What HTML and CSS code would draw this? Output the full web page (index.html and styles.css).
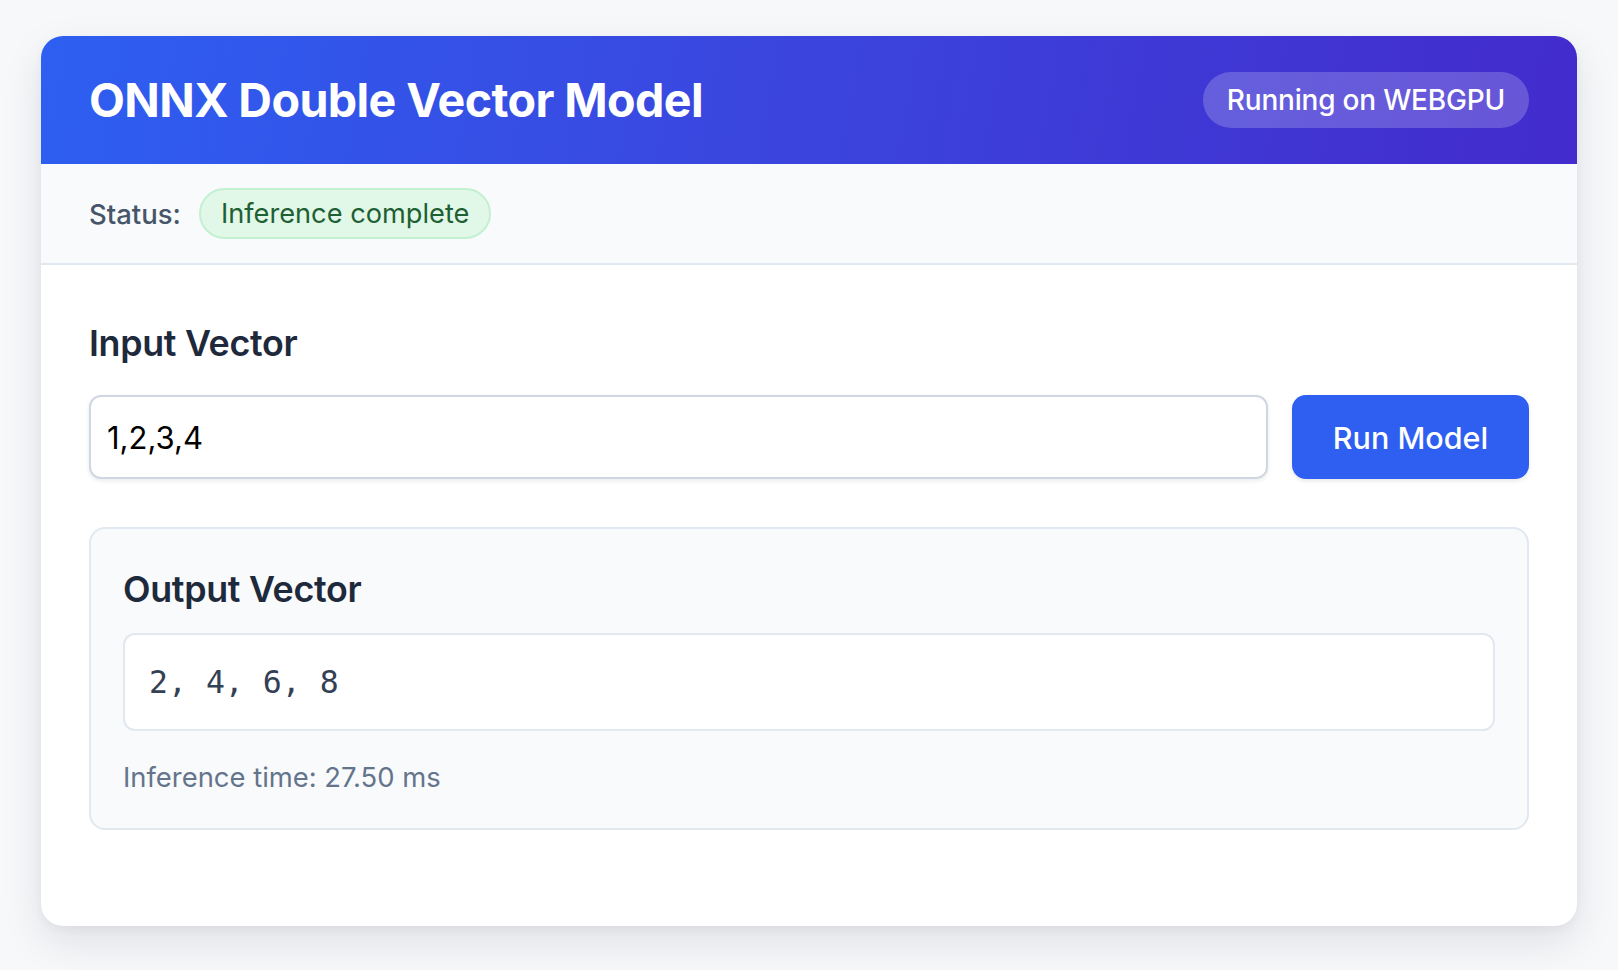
FILE: index.html
```html
<!DOCTYPE html>
<html lang="en">
<head>
<meta charset="utf-8">
<title>ONNX Double Vector Model</title>
<link rel="stylesheet" href="styles.css">
</head>
<body>
<main class="card">
  <header class="card-header">
    <h1 class="title">ONNX Double Vector Model</h1>
    <span class="backend">Running on WEBGPU</span>
  </header>
  <div class="status-bar">
    <span class="status-label">Status:</span>
    <span class="status-pill">Inference complete</span>
  </div>
  <section class="content">
    <h2 class="section-title">Input Vector</h2>
    <div class="input-row">
      <input class="vector-input" type="text" value="1,2,3,4">
      <button class="run-btn" type="button">Run Model</button>
    </div>
    <div class="output-box">
      <h2 class="section-title out-title">Output Vector</h2>
      <div class="output-value">2, 4, 6, 8</div>
      <p class="timing">Inference time: 27.50 ms</p>
    </div>
  </section>
</main>
</body>
</html>
```

FILE: styles.css
```css
* { box-sizing: border-box; }
html, body { margin: 0; padding: 0; }
body {
  background: #f7f8fa;
  font-family: Inter, "Noto Sans", "Liberation Sans", sans-serif;
  color: #1e293b;
  padding: 36px 0 44px;
}
.card {
  width: 1536px;
  margin: 0 auto;
  background: #ffffff;
  border-radius: 22px;
  overflow: hidden;
  box-shadow: 0 16px 40px rgba(15, 23, 42, 0.10), 0 4px 10px rgba(15, 23, 42, 0.04);
}
.card-header {
  height: 128px;
  padding: 0 48px;
  display: flex;
  align-items: center;
  justify-content: space-between;
  background: linear-gradient(100deg, #2d5ff1 0%, #3a47df 45%, #432bcd 100%);
  color: #fff;
}
.title {
  margin: 0;
  font-size: 46.6px;
  font-weight: 700;
  letter-spacing: -0.6px;
}
.backend {
  display: inline-flex;
  align-items: center;
  height: 56px;
  padding: 0 24px;
  border-radius: 28px;
  background: rgba(255, 255, 255, 0.2);
  font-size: 28px;
  font-weight: 500;
  letter-spacing: -0.2px;
}
.status-bar {
  display: flex;
  align-items: center;
  gap: 18px;
  padding: 24px 48px;
  background: #f8fafc;
  border-bottom: 2px solid #e2e8f0;
}
.status-label {
  font-size: 27.5px;
  font-weight: 500;
  color: #475569;
}
.status-pill {
  display: inline-flex;
  align-items: center;
  height: 51px;
  padding: 0 20px;
  border-radius: 26px;
  background: #e1f8e8;
  border: 2px solid #c3f0d1;
  color: #1f5f34;
  font-size: 27.2px;
}
.content {
  padding: 56px 48px 96px;
}
.section-title {
  margin: 0 0 30px;
  font-size: 35.8px;
  font-weight: 600;
  color: #1e293b;
  letter-spacing: -0.3px;
}
.input-row {
  display: flex;
  gap: 24px;
}
.vector-input {
  flex: 1;
  height: 84px;
  padding: 0 16px;
  border: 2px solid #cfd7e3;
  border-radius: 12px;
  font-family: Inter, "Noto Sans", sans-serif;
  font-size: 31px;
  color: #000;
  box-shadow: 0 2px 4px rgba(15, 23, 42, 0.08);
  outline: none;
}
.run-btn {
  width: 237px;
  height: 84px;
  border: none;
  border-radius: 14px;
  background: #2e5ff1;
  color: #fff;
  font-family: Inter, "Noto Sans", sans-serif;
  font-size: 30.5px;
  font-weight: 500;
  box-shadow: 0 2px 4px rgba(15, 23, 42, 0.1);
}
.output-box {
  margin-top: 48px;
  padding: 38px 32px 34px;
  background: #f8fafc;
  border: 2px solid #e2e8f0;
  border-radius: 16px;
}
.out-title {
  margin-bottom: 22px;
}
.output-value {
  height: 98px;
  display: flex;
  align-items: center;
  padding: 0 24px;
  background: #fff;
  border: 2px solid #e2e8f0;
  border-radius: 12px;
  font-family: "DejaVu Sans Mono", "Liberation Mono", monospace;
  font-size: 31.5px;
  color: #334155;
}
.timing {
  margin: 29px 0 0;
  font-size: 27.4px;
  color: #64748b;
}
```
